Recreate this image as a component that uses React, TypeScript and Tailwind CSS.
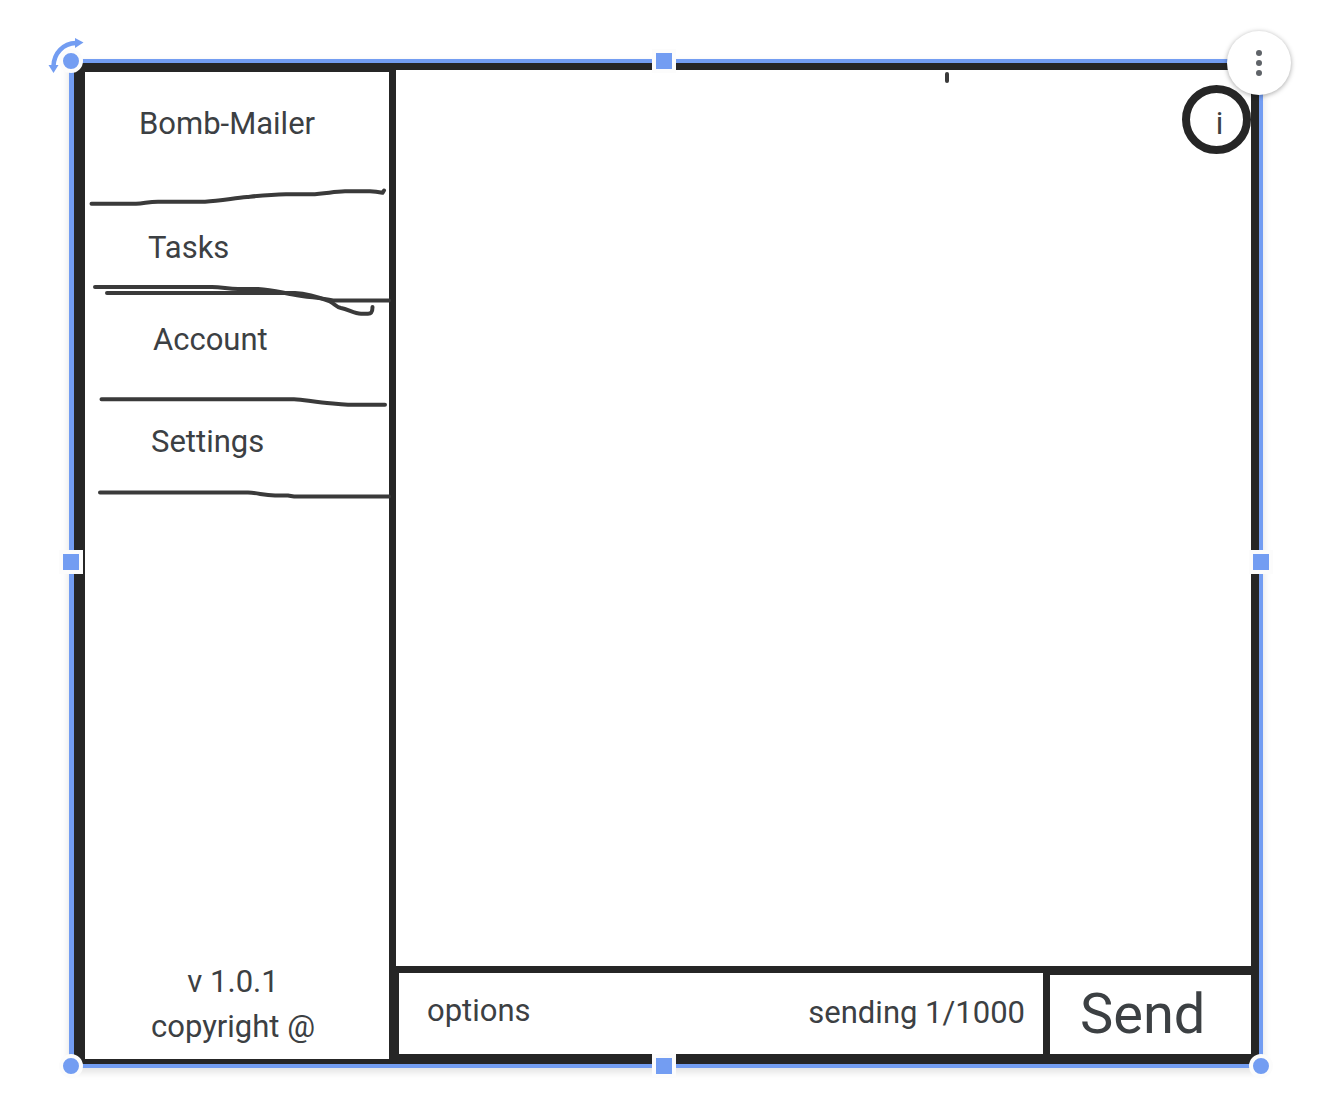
import type { ReactNode } from "react";

const INK = "#3a3a3a";

type StrokeProps = { viewBox: string; className: string; children: ReactNode };

function Stroke({ viewBox, className, children }: StrokeProps) {
  return (
    <svg
      viewBox={viewBox}
      className={`block w-[304px] shrink-0 overflow-visible ${className}`}
      fill="none"
      stroke={INK}
      strokeWidth="4"
      strokeLinecap="round"
      strokeLinejoin="round"
      aria-hidden="true"
    >
      {children}
    </svg>
  );
}

function Handle({ className }: { className: string }) {
  return (
    <span
      className={`absolute size-6 border-4 border-[#fcfcfc] bg-[#739df2] ${className}`}
    />
  );
}

function Sidebar() {
  return (
    <aside className="flex shrink-0 bg-[#262626] pt-[9px] pr-[7px] pb-[5px] pl-[11px]">
      <div className="flex w-[304px] flex-col bg-white pb-3">
        <h1 className="mt-8 pl-[54px]">Bomb-Mailer</h1>
        <Stroke viewBox="85 184 304 24" className="mt-10 h-6">
          <path d="M91.500 203.700H136C144 203.500 148 201.800 158 201.700H205C220 201 232 198.500 247 197C262 195.500 270 194.600 286 194.300H311C325 193.800 333 191.700 345 191.300H370C376 191.500 380 192.300 382.500 192.800L384 190.500" />
        </Stroke>
        <nav className="flex flex-col items-start">
          <button type="button" className="mt-5 ml-[63px]">
            Tasks
          </button>
          <Stroke viewBox="85 280 304 40" className="mt-3 h-10">
            <path d="M95 287H212C222 287 228 289 238 289H258C273 290 281 292.500 293 294.500C309 297.500 319 297.500 333 300.500H389" />
            <path d="M107 293H295C309 293.500 321 298 330 301.500C335 304 336 307 341 308C348 309 354 313.500 361 313.700H368C372 313.700 372.500 311 372.500 307" />
          </Stroke>
          <button type="button" className="ml-[68px]">
            Account
          </button>
          <Stroke viewBox="85 392 304 18" className="mt-8 h-[18px]">
            <path d="M101.500 399.300H294C304 399.500 310 401.500 322 402.500C334 403.500 338 404.500 348 404.700H385" />
          </Stroke>
          <button type="button" className="mt-3 ml-[66px]">
            Settings
          </button>
          <Stroke viewBox="85 486 304 16" className="mt-6 h-4">
            <path d="M100 492.600H248C258 493 263 495 275 495.500H288C292 496 292 496.500 298 496.500H389" />
          </Stroke>
        </nav>
        <footer className="mt-auto flex w-[296px] flex-col items-center gap-[5px]">
          <p>v 1.0.1</p>
          <p>copyright @</p>
        </footer>
      </div>
    </aside>
  );
}

function Workspace() {
  return (
    <div className="flex min-w-0 flex-1 flex-col bg-[#262626] pt-[7px] pr-2 pb-[10px]">
      <main className="relative flex flex-1 justify-end bg-white pt-[15px]">
        <span className="absolute top-0.5 left-[64%] ml-0.5 h-[11px] w-1 rounded-sm bg-[#3a3a3a]" />
        <button
          type="button"
          aria-label="Information"
          className="flex size-[69px] items-center justify-center rounded-full border-8 border-[#262626] pt-2 pl-1.5"
        >
          i
        </button>
      </main>
      <div className="flex gap-[7px] pt-[7px] pl-[3px]">
        <div className="flex h-[81px] flex-1 items-center justify-between bg-white pr-[18px] pb-0.5 pl-7">
          <button type="button" className="pb-1">
            options
          </button>
          <p>sending 1/1000</p>
        </div>
        <button
          type="button"
          className="mt-0.5 h-[79px] w-[201px] bg-white pb-0.5 pl-[30px] text-left text-[56px]"
        >
          Send
        </button>
      </div>
    </div>
  );
}

export default function App() {
  return (
    <div className="flex min-h-screen bg-white pt-[59px] pr-[61px] pb-[34px] pl-[69px] font-[Roboto,sans-serif] text-[31px] leading-10 text-[#3c4043]">
      <div className="relative flex flex-1 border-4 border-l-[5px] border-[#739df2] shadow-[0_4px_8px_rgba(0,0,0,0.12)]">
        <Sidebar />
        <Workspace />

        <Handle className="-top-[14px] -left-[15px] rounded-full" />
        <Handle className="-top-[14px] left-1/2 -ml-[15px]" />
        <Handle className="top-1/2 -left-[15px] -mt-[14px]" />
        <Handle className="top-1/2 -right-[14px] -mt-[14px]" />
        <Handle className="-bottom-[14px] -left-[15px] rounded-full" />
        <Handle className="-bottom-[14px] left-1/2 -ml-[15px]" />
        <Handle className="-right-[14px] -bottom-[14px] rounded-full" />

        <svg
          viewBox="46 36 40 40"
          className="absolute -top-[27px] -left-7 size-10"
          fill="none"
          aria-hidden="true"
        >
          <path
            d="M53.500 66C54 53 63 43.500 76 43"
            stroke="#739df2"
            strokeWidth="4.500"
          />
          <path d="M75 38L83.500 42.500L75 48Z" fill="#739df2" />
          <path d="M48.500 65H58.500L53.500 73Z" fill="#739df2" />
        </svg>

        <button
          type="button"
          aria-label="More options"
          className="absolute -top-8 -right-8 flex size-16 flex-col items-center justify-center gap-1 rounded-full bg-white shadow-[0_1px_5px_rgba(0,0,0,0.35)]"
        >
          <span className="size-1.5 rounded-full bg-[#5f6368]" />
          <span className="size-1.5 rounded-full bg-[#5f6368]" />
          <span className="size-1.5 rounded-full bg-[#5f6368]" />
        </button>
      </div>
    </div>
  );
}
